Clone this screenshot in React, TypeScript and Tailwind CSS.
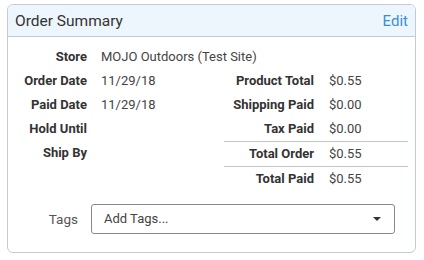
const leftRows = [
  { label: 'Order Date', value: '11/29/18' },
  { label: 'Paid Date', value: '11/29/18' },
  { label: 'Hold Until', value: '' },
  { label: 'Ship By', value: '' },
];

const rightRows = [
  { label: 'Product Total', value: '$0.55', line: false },
  { label: 'Shipping Paid', value: '$0.00', line: false },
  { label: 'Tax Paid', value: '$0.00', line: false },
  { label: 'Total Order', value: '$0.55', line: true },
  { label: 'Total Paid', value: '$0.55', line: true },
];

export default function App() {
  return (
    <div className="w-[424px] h-[260px] bg-white pt-[4px] pl-[7px] font-['Roboto',sans-serif]">
      <div className="w-[409px] h-[249px] border border-[#c3ccd4] rounded-[6px] overflow-hidden flex flex-col">
        {/* Header */}
        <div className="h-[32px] shrink-0 bg-[#eef6fd] border-b border-[#c3ccd4] flex items-center justify-between pl-[7px] pr-[7px] pt-[2px]">
          <span className="text-[15.5px] text-[#333]">Order Summary</span>
          <button className="text-[15px] text-[#3b8ed6]">Edit</button>
        </div>

        {/* Body */}
        <div className="pt-[8px] text-[13px] text-[#444]">
          <div className="h-[24px] flex items-center">
            <span className="w-[79px] text-right font-bold text-[#333]">Store</span>
            <span className="ml-[14px]">MOJO Outdoors (Test Site)</span>
          </div>
          <div className="flex">
            <div className="w-[216px]">
              {leftRows.map((r) => (
                <div key={r.label} className="h-[24px] flex items-center">
                  <span className="w-[79px] text-right font-bold text-[#333]">{r.label}</span>
                  <span className="ml-[14px]">{r.value}</span>
                </div>
              ))}
            </div>
            <div className="w-[184px]">
              {rightRows.map((r) => (
                <div
                  key={r.label}
                  className={`flex items-center ${r.line ? 'h-[25px] border-t border-[#c4c4c4]' : 'h-[24px]'}`}
                >
                  <span className="w-[90px] text-right font-bold text-[#333]">{r.label}</span>
                  <span className="ml-[15px]">{r.value}</span>
                </div>
              ))}
            </div>
          </div>

          {/* Tags */}
          <div className="mt-[13px] flex items-center">
            <span className="w-[70px] text-right text-[13.5px] text-[#555] pt-[1px]">Tags</span>
            <div className="ml-[13px] w-[304px] h-[30px] border border-[#8a8a8a] rounded-[3px] flex items-center justify-between pl-[12px] pr-[13px]">
              <span className="text-[#444]">Add Tags...</span>
              <svg width="8" height="4" viewBox="0 0 8 4">
                <path d="M0 0 L8 0 L4 4 Z" fill="#333" />
              </svg>
            </div>
          </div>
        </div>
      </div>
    </div>
  );
}
